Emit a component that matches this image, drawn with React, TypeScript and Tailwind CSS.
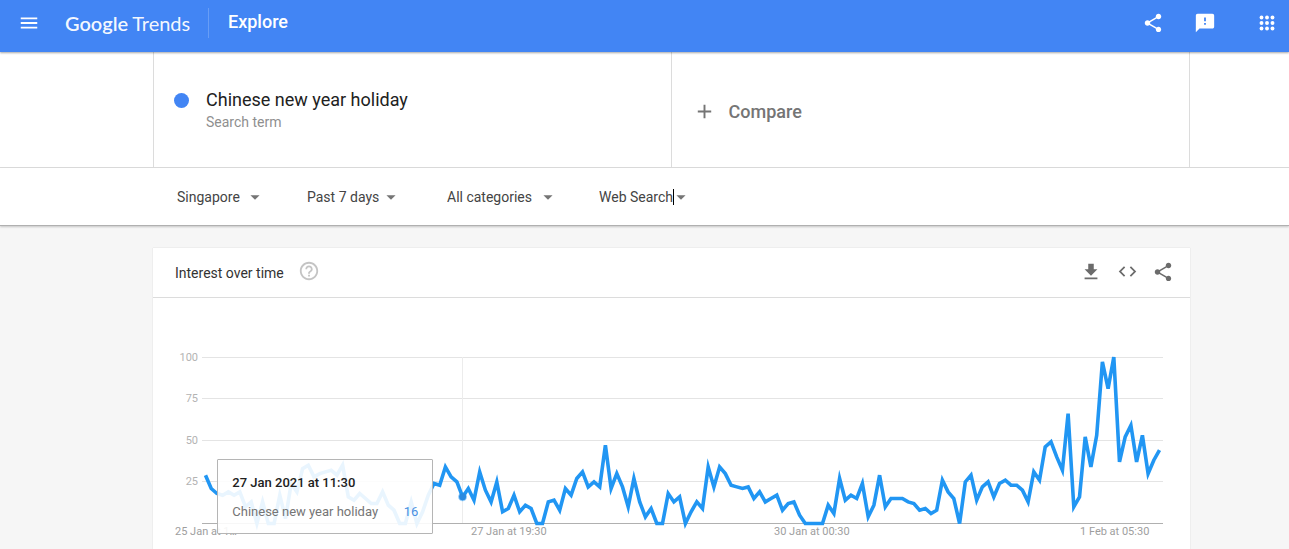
import React from "react";
import {
  MdAdd,
  MdArrowDropDown,
  MdCode,
  MdFeedback,
  MdFileDownload,
  MdHelpOutline,
  MdMenu,
  MdShare,
} from "react-icons/md";

const INTEREST = [
  29, 21, 18, 17, 19, 17, 19, 10, 13, 0, 13, 0, 0, 17, 3, 24, 19, 33, 35, 28,
  30, 31, 32, 29, 35, 16, 14, 18, 15, 12, 12, 19, 11, 8, 0, 0, 13, 0, 7, 17,
  24, 23, 34, 28, 25, 16, 21, 14, 31, 20, 13, 25, 7, 9, 17, 7, 11, 9, 0, 0,
  13, 14, 8, 21, 17, 27, 31, 22, 25, 22, 47, 21, 30, 22, 10, 27, 13, 4, 9, 0,
  0, 18, 13, 16, 0, 7, 13, 9, 34, 22, 34, 30, 23, 22, 21, 22, 15, 19, 13, 15,
  17, 8, 12, 13, 5, 0, 0, 0, 0, 11, 6, 27, 14, 17, 15, 24, 4, 11, 29, 10,
  15, 15, 15, 13, 12, 8, 9, 6, 8, 26, 19, 15, 0, 25, 29, 14, 22, 25, 16, 24,
  26, 23, 23, 20, 13, 31, 26, 46, 49, 40, 32, 66, 10, 16, 52, 34, 53, 97, 81, 100,
  37, 52, 59, 37, 53, 30, 38, 44,
];

const HOVERED = 45;
const BASELINE = 225.5;
const xAt = (i: number) => 52.5 + (i * 954) / (INTEREST.length - 1);
const yAt = (v: number) => BASELINE - v * 1.665;

const DATES = [
  { label: "25 Jan at 1…", x: 22 },
  { label: "27 Jan at 19:30", x: 318 },
  { label: "30 Jan at 00:30", x: 621 },
  { label: "1 Feb at 05:30", x: 927 },
];

const FILTERS = [
  { name: "Region", value: "Singapore", width: "w-[130px]", gap: "gap-1" },
  { name: "Time range", value: "Past 7 days", width: "w-[140px]", gap: "gap-0" },
  { name: "Category", value: "All categories", width: "w-[152px]", gap: "gap-1" },
  { name: "Search type", value: "Web Search", width: "w-[140px]", gap: "gap-0", caret: true },
];

function IconButton({ label, children }: { label: string; children: React.ReactNode }) {
  return (
    <button type="button" aria-label={label} className="flex size-[22px] items-center justify-center">
      {children}
    </button>
  );
}

function Header() {
  return (
    <header className="relative z-10 flex h-[52px] items-center bg-[#4285f4] pb-1.5 pl-[18px] pr-[11px] text-white shadow-[0_1px_2px_rgba(0,0,0,0.35)]">
      <IconButton label="Main menu">
        <MdMenu size={22} />
      </IconButton>
      <div className="ml-[25px] flex w-[144px] items-center border-r border-white/20">
        <a
          href="#home"
          className="flex gap-1 whitespace-nowrap font-['Lato',sans-serif] text-xl leading-[30px] text-white/95"
        >
          <span className="font-semibold">Google</span>
          <span>Trends</span>
        </a>
      </div>
      <h1 className="ml-[19px] pb-0.5 text-lg font-medium leading-6">Explore</h1>
      <div className="ml-auto flex items-center gap-[30px]">
        <IconButton label="Share">
          <MdShare size={22} />
        </IconButton>
        <IconButton label="Send feedback">
          <MdFeedback size={22} />
        </IconButton>
        <div className="ml-2.5">
          <IconButton label="Google apps">
            <svg width="22" height="22" viewBox="0 0 24 24" fill="currentColor">
              {[6, 12, 18].map((cy) =>
                [6, 12, 18].map((cx) => <circle key={`${cx}-${cy}`} cx={cx} cy={cy} r="2.1" />),
              )}
            </svg>
          </IconButton>
        </div>
      </div>
    </header>
  );
}

function SearchTerms() {
  return (
    <section className="border-b border-[#dcdcdc] pl-[153px] pr-[99px]">
      <div className="grid h-[115px] grid-cols-2 border-x border-[#dcdcdc]">
        <div className="flex items-start border-r border-[#dcdcdc] pl-5 pt-9">
          <span className="mt-[5px] size-[15px] rounded-full bg-[#4285f4]" />
          <div className="ml-[17px]">
            <h2 className="text-lg leading-6 text-[#212121]">Chinese new year holiday</h2>
            <p className="text-sm leading-5 text-[#8f8f8f]">Search term</p>
          </div>
        </div>
        <div className="flex items-center pl-[21px] pt-1">
          <button type="button" className="flex items-center gap-[13px] text-[#757575]">
            <MdAdd size={23} />
            <span className="text-lg font-medium leading-6">Compare</span>
          </button>
        </div>
      </div>
    </section>
  );
}

function Filters() {
  return (
    <section className="relative flex h-[58px] items-center border-b border-[#b0b0b0] pl-[177px] shadow-[0_1px_2px_rgba(0,0,0,0.2)]">
      {FILTERS.map((filter) => (
        <label key={filter.name} className={`flex items-center ${filter.width} ${filter.gap}`}>
          <select
            aria-label={filter.name}
            className={`appearance-none bg-transparent text-sm leading-4 text-[#444] outline-none ${
              filter.caret ? "-mr-1 border-r border-black" : ""
            }`}
          >
            <option>{filter.value}</option>
          </select>
          <MdArrowDropDown size={22} className="pointer-events-none text-[#757575]" />
        </label>
      ))}
    </section>
  );
}

function Chart() {
  const points = INTEREST.map((v, i) => `${xAt(i).toFixed(1)},${yAt(v).toFixed(1)}`).join(" ");
  return (
    <div className="relative">
      <svg
        viewBox="0 0 1037 251"
        className="block h-auto w-full font-['Roboto',sans-serif] text-[11px]"
        role="img"
        aria-label="Interest over time"
      >
        {[100, 75, 50, 25].map((tick) => (
          <g key={tick}>
            <line x1="49" x2="1010" y1={Math.floor(yAt(tick)) + 0.5} y2={Math.floor(yAt(tick)) + 0.5} stroke="#e4e4e4" />
            <text x="45" y={Math.floor(yAt(tick)) + 4} textAnchor="end" fill="#b3b3b3">
              {tick}
            </text>
          </g>
        ))}
        <line x1="49" x2="1010" y1={BASELINE} y2={BASELINE} stroke="#b0b0b0" />
        <line x1="309.5" x2="309.5" y1="59" y2="225" stroke="#ececec" />
        {DATES.map((date) => (
          <text key={date.label} x={date.x} y="237" fill="#9e9e9e">
            {date.label}
          </text>
        ))}
        <polyline points={points} fill="none" stroke="#2196f3" strokeWidth="3.6" strokeMiterlimit="5" />
        <circle cx={xAt(HOVERED)} cy={yAt(INTEREST[HOVERED])} r="4.5" fill="#2196f3" fillOpacity="0.45" />
        <circle cx={xAt(HOVERED)} cy={yAt(INTEREST[HOVERED])} r="3.5" fill="#2a8ae0" />
      </svg>
      <div
        role="tooltip"
        className="absolute left-[6.2%] top-[161px] w-[216px] rounded-[1px] border border-[#b5b5b5] bg-white/90 px-3.5 pb-2.5 pt-3"
      >
        <p className="text-[13px] font-medium leading-[22px] text-[#212121]">27 Jan 2021 at 11:30</p>
        <p className="mt-[7px] flex justify-between text-[13px] leading-[22px] text-[#757575]">
          <span>Chinese new year holiday</span>
          <span className="text-[#4a90e2]">16</span>
        </p>
      </div>
    </div>
  );
}

export default function App() {
  return (
    <div className="min-h-screen bg-[#f6f6f6] font-['Roboto',sans-serif]">
      <Header />
      <div className="bg-white">
        <SearchTerms />
        <Filters />
      </div>
      <main className="pl-[153px] pr-[99px] pt-[22px]">
        <article className="bg-white shadow-[0_0_1px_rgba(0,0,0,0.2)]">
          <div className="flex h-[50px] items-center border-b border-[#dcdcdc] pl-[22px] pr-4">
            <h3 className="text-sm leading-5 text-[#333]">Interest over time</h3>
            <button type="button" aria-label="Help" className="ml-3.5 pb-1 text-[#c4c4c4]">
              <MdHelpOutline size={22} />
            </button>
            <div className="ml-auto flex items-center gap-3.5 pb-0.5 text-[#6b6b6b]">
              <IconButton label="Download CSV">
                <MdFileDownload size={22} />
              </IconButton>
              <IconButton label="Embed">
                <MdCode size={21} />
              </IconButton>
              <IconButton label="Share chart">
                <MdShare size={22} />
              </IconButton>
            </div>
          </div>
          <Chart />
        </article>
      </main>
    </div>
  );
}
